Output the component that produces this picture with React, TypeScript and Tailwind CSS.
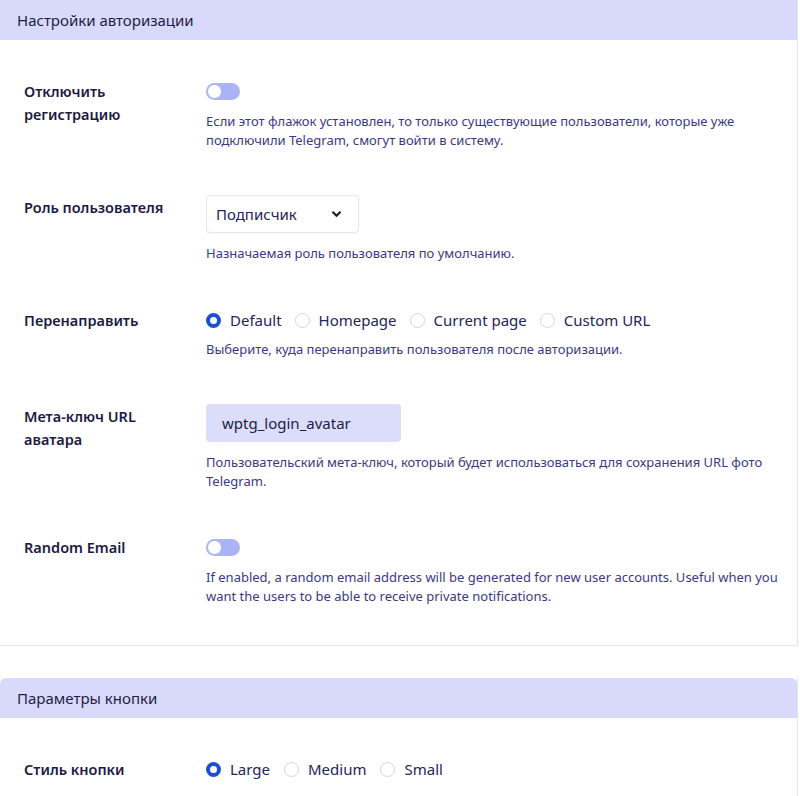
import React from 'react'

const Toggle: React.FC = () => (
    <div className="mt-[3px] flex h-[17px] w-[34px] items-center rounded-full bg-[#a9b3f6] p-[1px]">
        <div className="h-[15px] w-[15px] rounded-full border border-[#a9b3f6] bg-white" />
    </div>
)

const Radio: React.FC<{ label: string; checked?: boolean }> = ({ label, checked }) => (
    <label className="flex items-center gap-[9px]">
        {checked ? (
            <span className="h-[15px] w-[15px] rounded-full border-[4.5px] border-[#1d4fd1] bg-white" />
        ) : (
            <span className="h-[15px] w-[15px] rounded-full border border-[#d4d4dc] bg-white" />
        )}
        <span className="text-[15px] text-[#27245a]">{label}</span>
    </label>
)

const Desc: React.FC<{ children: React.ReactNode }> = ({ children }) => (
    <p className="text-[13px] leading-[19px] text-[#3d3883]">{children}</p>
)

const Row: React.FC<{ label: React.ReactNode; children: React.ReactNode }> = ({ label, children }) => (
    <div className="flex items-start">
        <div className="w-[206px] shrink-0 pl-6 text-[14.5px] font-semibold leading-[23px] text-[#1c1a44]">
            {label}
        </div>
        <div className="flex flex-col">{children}</div>
    </div>
)

export default function App() {
    return (
        <div className="min-h-[796px] bg-white font-['Noto_Sans',sans-serif]">
            {/* Auth settings */}
            <section className="w-[798px] border-r border-b border-[#e4e4ea]">
                <div className="flex h-10 items-center bg-[#d9d9fb] pl-[17px] text-[15px] text-[#1f1d45]">
                    Настройки авторизации
                </div>

                <div className="flex flex-col gap-[45px] pt-10 pb-[39px]">
                    <Row label={<>Отключить<br />регистрацию</>}>
                        <Toggle />
                        <div className="mt-[12px] w-[540px]">
                            <Desc>
                                Если этот флажок установлен, то только существующие пользователи, которые уже
                                подключили Telegram, смогут войти в систему.
                            </Desc>
                        </div>
                    </Row>

                    <Row label={<div className="pt-px">Роль пользователя</div>}>
                        <div className="flex h-[38px] w-[153px] items-center justify-between rounded border border-[#e6e6ee] bg-white pr-4 pl-[9px] shadow-[0_1px_2px_rgba(0,0,0,0.04)]">
                            <span className="text-[15px] text-[#27245a]">Подписчик</span>
                            <svg width="11" height="8" viewBox="0 0 11 8" fill="none">
                                <path d="M1.5 1.8 5.5 5.8 9.5 1.8" stroke="#1c1a44" strokeWidth="2.2" />
                            </svg>
                        </div>
                        <div className="mt-[11px]">
                            <Desc>Назначаемая роль пользователя по умолчанию.</Desc>
                        </div>
                    </Row>

                    <Row label={<div className="pt-[1px]">Перенаправить</div>}>
                        <div className="flex h-[24px] items-center gap-[13px]">
                            <Radio label="Default" checked />
                            <Radio label="Homepage" />
                            <Radio label="Current page" />
                            <Radio label="Custom URL" />
                        </div>
                        <div className="mt-[8px]">
                            <Desc>Выберите, куда перенаправить пользователя после авторизации.</Desc>
                        </div>
                    </Row>

                    <Row label={<div className="pt-px">Мета-ключ URL<br />аватара</div>}>
                        <div className="flex h-[38px] w-[195px] items-center rounded bg-[#dcdcfb] pl-[16px] text-[15px] text-[#1f1d45]">
                            wptg_login_avatar
                        </div>
                        <div className="mt-[11px] w-[560px]">
                            <Desc>
                                Пользовательский мета-ключ, который будет использоваться для сохранения URL фото
                                Telegram.
                            </Desc>
                        </div>
                    </Row>

                    <Row label="Random Email">
                        <Toggle />
                        <div className="mt-[12px] w-[580px]">
                            <Desc>
                                If enabled, a random email address will be generated for new user accounts. Useful when you
                                want the users to be able to receive private notifications.
                            </Desc>
                        </div>
                    </Row>
                </div>
            </section>

            {/* Button settings */}
            <section className="mt-8 w-[798px] border-r border-[#e4e4ea]">
                <div className="flex h-10 items-center rounded-t-md bg-[#d9d9fb] pl-[17px] text-[15px] text-[#1f1d45]">
                    Параметры кнопки
                </div>
                <div className="pt-10 pb-6">
                    <Row label="Стиль кнопки">
                        <div className="flex h-[23px] items-center gap-[14px]">
                            <Radio label="Large" checked />
                            <Radio label="Medium" />
                            <Radio label="Small" />
                        </div>
                    </Row>
                </div>
            </section>
        </div>
    )
}
